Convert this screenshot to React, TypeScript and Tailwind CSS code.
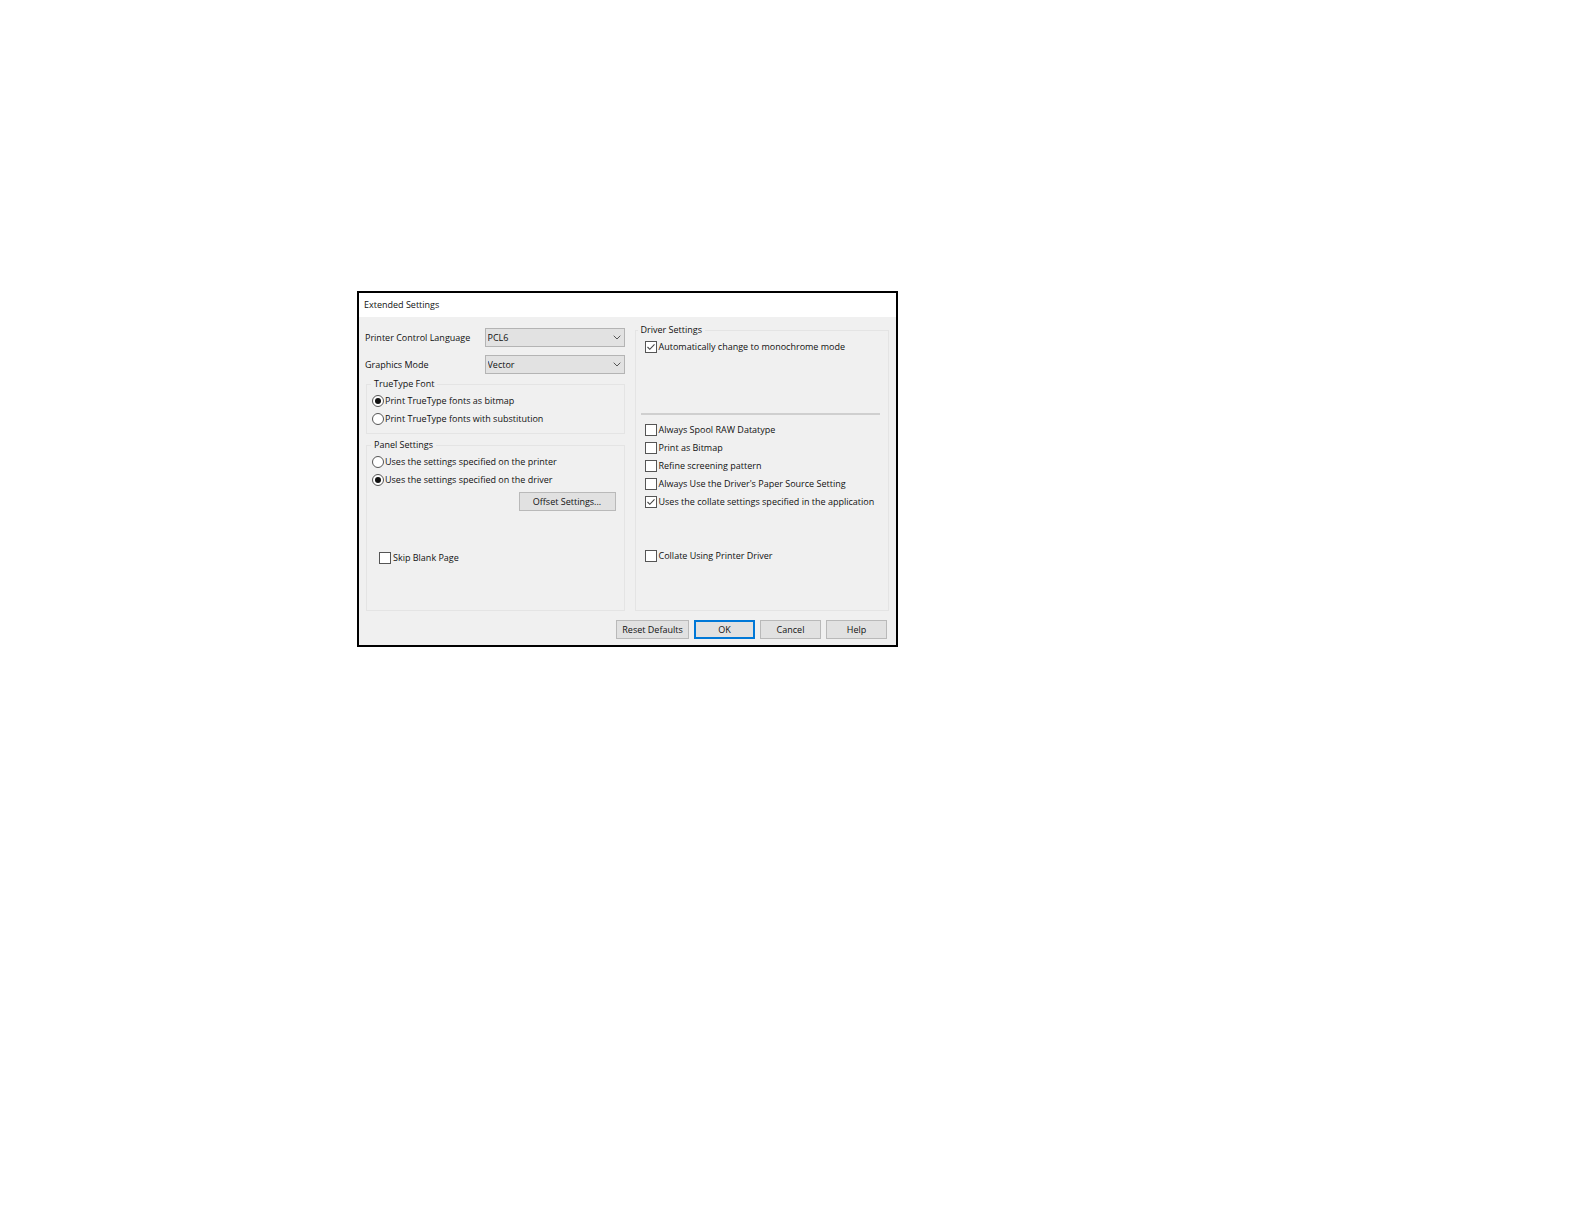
import { useState } from "react";
import type { ReactNode } from "react";

const driverOptions = [
  { id: "spoolRaw", label: "Always Spool RAW Datatype" },
  { id: "printBitmap", label: "Print as Bitmap" },
  { id: "refine", label: "Refine screening pattern" },
  { id: "paperSource", label: "Always Use the Driver's Paper Source Setting" },
  { id: "collateApp", label: "Uses the collate settings specified in the application" }
];

const defaults: Record<string, boolean> = {
  monochrome: true,
  spoolRaw: false,
  printBitmap: false,
  refine: false,
  paperSource: false,
  collateApp: true,
  collateDriver: false,
  skipBlank: false
};

function Group({ title, className, children }: { title: string; className: string; children: ReactNode }) {
  return (
    <fieldset className={`min-w-0 border border-[#e4e4e4] pt-[2px] ${className}`}>
      <legend className="px-[3px] leading-3">{title}</legend>
      {children}
    </fieldset>
  );
}

function Check({ label, checked, onChange }: { label: string; checked: boolean; onChange: () => void }) {
  return (
    <label className="flex h-[18px] items-center gap-[2px] whitespace-nowrap">
      <span className="relative size-3 shrink-0">
        <input type="checkbox" checked={checked} onChange={onChange} className="block size-3 appearance-none border border-[#555] bg-white" />
        {checked ? (
          <svg viewBox="0 0 12 12" className="pointer-events-none absolute inset-0 size-3" fill="none" stroke="#444" strokeWidth="1.1">
            <path d="M2.5 6 L4.8 8.3 L9.5 3.4" />
          </svg>
        ) : null}
      </span>
      {label}
    </label>
  );
}

function Radio({ name, label, checked, onChange }: { name: string; label: string; checked: boolean; onChange: () => void }) {
  return (
    <label className="flex h-[18px] items-center gap-px whitespace-nowrap">
      <span className="relative size-3 shrink-0">
        <input type="radio" name={name} checked={checked} onChange={onChange} className="block size-3 appearance-none rounded-full border border-[#555] bg-white" />
        {checked ? <span className="pointer-events-none absolute inset-[3px] rounded-full bg-[#111]" /> : null}
      </span>
      {label}
    </label>
  );
}

function SelectRow({ id, label, options }: { id: string; label: string; options: string[] }) {
  return (
    <div className="flex h-[19px] items-center justify-between">
      <label htmlFor={id}>{label}</label>
      <div className="relative w-[140px]">
        <select id={id} className="block h-[19px] w-full appearance-none border border-[#b4b4b4] bg-[#e2e2e2] px-[2px]">
          {options.map((option) => (
            <option key={option}>{option}</option>
          ))}
        </select>
        <svg viewBox="0 0 8 5" className="pointer-events-none absolute top-[7px] right-1 h-[5px] w-2" fill="none" stroke="#555" strokeWidth="1">
          <path d="M0.7 0.7 L4 4 L7.3 0.7" />
        </svg>
      </div>
    </div>
  );
}

export default function App() {
  const [checks, setChecks] = useState(defaults);
  const [font, setFont] = useState("bitmap");
  const [panel, setPanel] = useState("driver");

  const toggle = (id: string) => setChecks({ ...checks, [id]: !checks[id] });

  const button = "h-[19px] border border-[#b9b9b9] bg-[#e1e1e1] whitespace-nowrap";

  return (
    <main className="min-h-screen bg-white pt-[291px] pl-[357px] font-['Open_Sans',sans-serif] text-[9px] text-[#111]">
      <section role="dialog" aria-labelledby="title" className="w-full max-w-[541px] border-2 border-black bg-[#f0f0f0]">
        <h1 id="title" className="h-6 bg-white pl-[5px] leading-6">Extended Settings</h1>

        <div className="grid grid-cols-[259fr_254fr] items-start gap-[10px] pt-[7px] pr-[7px] pl-[6px]">
          <div className="pt-1">
            <div className="space-y-2">
              <SelectRow id="language" label="Printer Control Language" options={["PCL6", "PS"]} />
              <SelectRow id="graphics" label="Graphics Mode" options={["Vector", "Raster"]} />
            </div>
            <Group title="TrueType Font" className="mt-1 ml-px pb-[5px] pl-1">
              <div className="pl-px">
                <Radio name="font" label="Print TrueType fonts as bitmap" checked={font === "bitmap"} onChange={() => setFont("bitmap")} />
                <Radio name="font" label="Print TrueType fonts with substitution" checked={font === "substitution"} onChange={() => setFont("substitution")} />
              </div>
            </Group>
            <Group title="Panel Settings" className="mt-[5px] ml-px pb-[43px] pl-1">
              <div className="pl-px">
                <Radio name="panel" label="Uses the settings specified on the printer" checked={panel === "printer"} onChange={() => setPanel("printer")} />
                <Radio name="panel" label="Uses the settings specified on the driver" checked={panel === "driver"} onChange={() => setPanel("driver")} />
              </div>
              <div className="mt-[3px] flex justify-end pr-2">
                <button type="button" className={`w-[97px] ${button}`}>Offset Settings...</button>
              </div>
              <div className="mt-[38px] pl-2">
                <Check label="Skip Blank Page" checked={checks.skipBlank} onChange={() => toggle("skipBlank")} />
              </div>
            </Group>
          </div>

          <Group title="Driver Settings" className="pb-[45px] pl-[2px]">
            <div className="pl-[7px]">
              <Check label="Automatically change to monochrome mode" checked={checks.monochrome} onChange={() => toggle("monochrome")} />
            </div>
            <hr className="mt-[57px] mr-2 ml-[3px] border-t-2 border-[#cfcfcf]" />
            <div className="mt-[6px] pl-[7px]">
              {driverOptions.map((option) => (
                <Check key={option.id} label={option.label} checked={checks[option.id]} onChange={() => toggle(option.id)} />
              ))}
            </div>
            <div className="mt-9 pl-[7px]">
              <Check label="Collate Using Printer Driver" checked={checks.collateDriver} onChange={() => toggle("collateDriver")} />
            </div>
          </Group>
        </div>

        <div className="flex justify-end gap-[5px] pt-[9px] pr-[9px] pb-[6px]">
          <button type="button" className={`w-[73px] ${button}`}>Reset Defaults</button>
          <button type="button" className="h-[19px] w-[61px] border-2 border-[#0078d7] bg-[#e1e1e1]">OK</button>
          <button type="button" className={`w-[61px] ${button}`}>Cancel</button>
          <button type="button" className={`w-[61px] ${button}`}>Help</button>
        </div>
      </section>
    </main>
  );
}
